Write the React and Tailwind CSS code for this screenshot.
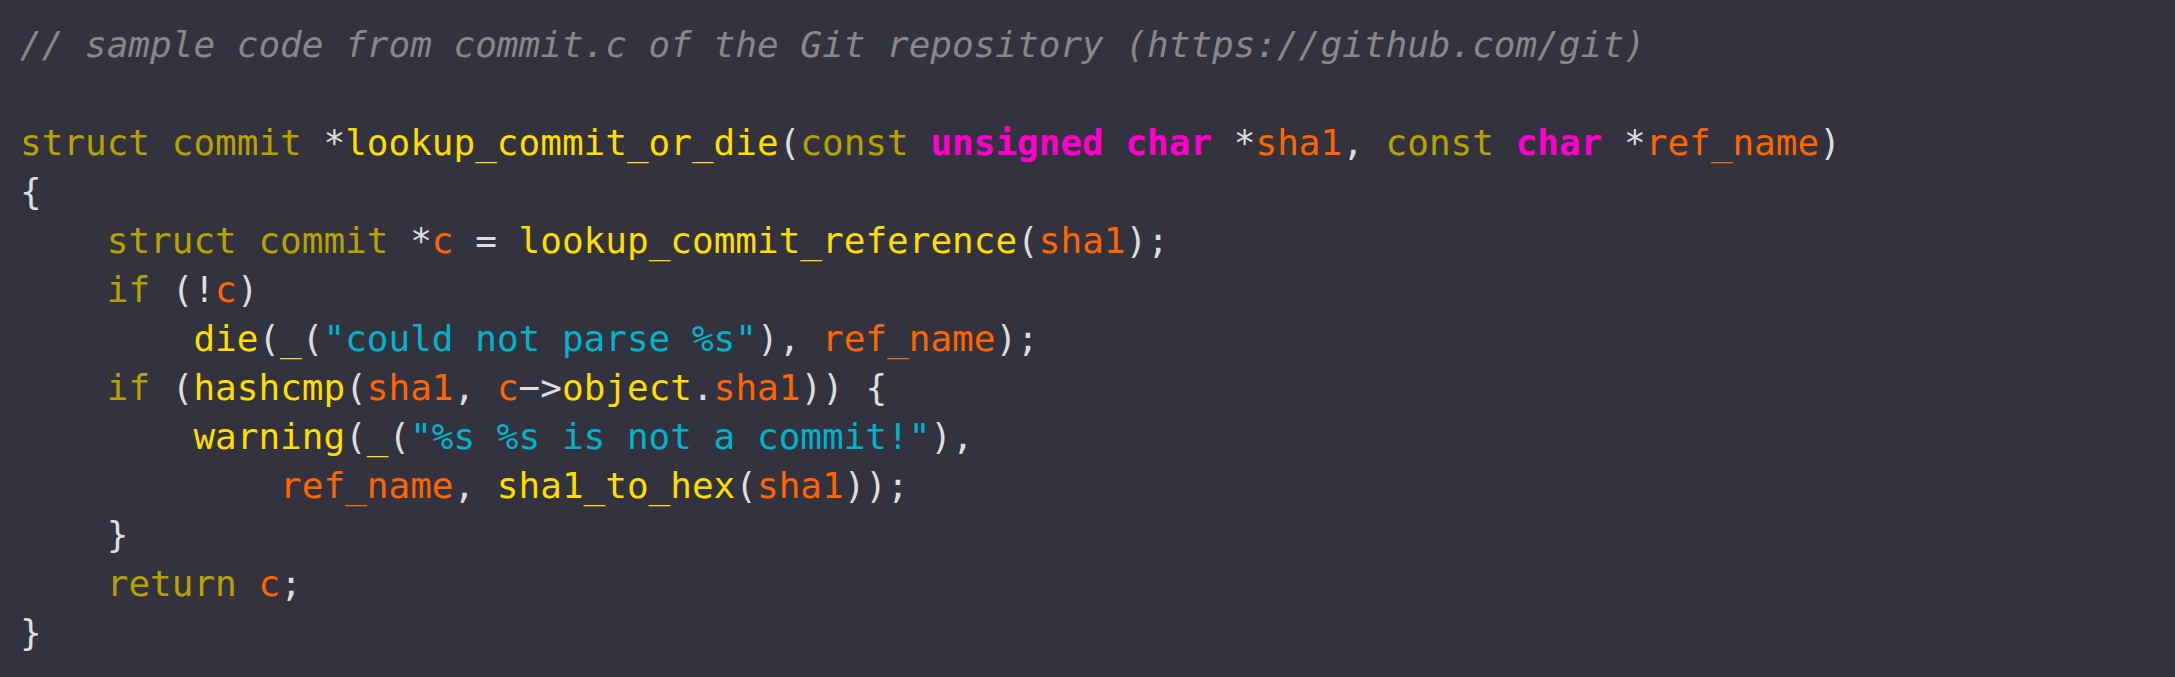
const kw = "text-[#b8a200]";
const fn = "text-[#ffdd00]";
const ty = "text-[#ff00cc] font-bold";
const va = "text-[#ff6600]";
const st = "text-[#00b4cc]";
const pu = "text-[#dddddd]";

function T({ c, children }) {
  return <span className={c}>{children}</span>;
}

export default function App() {
  return (
    <div className="min-h-[677px] w-full bg-[#33333f] pl-5 pt-5 font-['DejaVu_Sans_Mono',monospace] text-[36px] leading-[49px] text-[#dddddd]">
      <pre className="whitespace-pre font-['DejaVu_Sans_Mono',monospace]">
        <T c="text-[#888888] italic">// sample code from commit.c of the Git repository (https://github.com/git)</T>
        {"\n\n"}
        <T c={kw}>struct commit</T> <T c={pu}>*</T><T c={fn}>lookup_commit_or_die</T><T c={pu}>(</T><T c={kw}>const</T> <T c={ty}>unsigned char</T> <T c={pu}>*</T><T c={va}>sha1</T><T c={pu}>,</T> <T c={kw}>const</T> <T c={ty}>char</T> <T c={pu}>*</T><T c={va}>ref_name</T><T c={pu}>)</T>
        {"\n{\n    "}
        <T c={kw}>struct commit</T> <T c={pu}>*</T><T c={va}>c</T> <T c={pu}>=</T> <T c={fn}>lookup_commit_reference</T><T c={pu}>(</T><T c={va}>sha1</T><T c={pu}>);</T>
        {"\n    "}
        <T c={kw}>if</T> <T c={pu}>(!</T><T c={va}>c</T><T c={pu}>)</T>
        {"\n        "}
        <T c={fn}>die</T><T c={pu}>(</T><T c={fn}>_</T><T c={pu}>(</T><T c={st}>"could not parse %s"</T><T c={pu}>),</T> <T c={va}>ref_name</T><T c={pu}>);</T>
        {"\n    "}
        <T c={kw}>if</T> <T c={pu}>(</T><T c={fn}>hashcmp</T><T c={pu}>(</T><T c={va}>sha1</T><T c={pu}>,</T> <T c={va}>c</T><T c={pu}>{"\u2212>"}</T><T c={fn}>object</T><T c={pu}>.</T><T c={va}>sha1</T><T c={pu}>)) {"{"}</T>
        {"\n        "}
        <T c={fn}>warning</T><T c={pu}>(</T><T c={fn}>_</T><T c={pu}>(</T><T c={st}>"%s %s is not a commit!"</T><T c={pu}>),</T>
        {"\n            "}
        <T c={va}>ref_name</T><T c={pu}>,</T> <T c={fn}>sha1_to_hex</T><T c={pu}>(</T><T c={va}>sha1</T><T c={pu}>));</T>
        {"\n    }\n    "}
        <T c={kw}>return</T> <T c={va}>c</T><T c={pu}>;</T>
        {"\n}"}
      </pre>
    </div>
  );
}
